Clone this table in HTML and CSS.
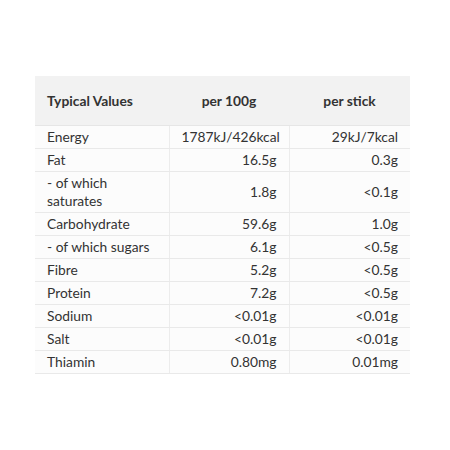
FILE: index.html
```html
<!DOCTYPE html>
<html>
<head>
<meta charset="utf-8">
<link rel="stylesheet" href="styles.css">
</head>
<body>
<div class="wrap">
<table class="nutri">
<colgroup><col class="c1"><col class="c2"><col class="c3"></colgroup>
<thead>
<tr><th class="lbl">Typical Values</th><th>per 100g</th><th>per stick</th></tr>
</thead>
<tbody>
<tr><td>Energy</td><td>1787kJ/426kcal</td><td>29kJ/7kcal</td></tr>
<tr><td>Fat</td><td>16.5g</td><td>0.3g</td></tr>
<tr><td>- of which<br>saturates</td><td>1.8g</td><td>&lt;0.1g</td></tr>
<tr><td>Carbohydrate</td><td>59.6g</td><td>1.0g</td></tr>
<tr><td>- of which sugars</td><td>6.1g</td><td>&lt;0.5g</td></tr>
<tr><td>Fibre</td><td>5.2g</td><td>&lt;0.5g</td></tr>
<tr><td>Protein</td><td>7.2g</td><td>&lt;0.5g</td></tr>
<tr><td>Sodium</td><td>&lt;0.01g</td><td>&lt;0.01g</td></tr>
<tr><td>Salt</td><td>&lt;0.01g</td><td>&lt;0.01g</td></tr>
<tr><td>Thiamin</td><td>0.80mg</td><td>0.01mg</td></tr>
</tbody>
</table>
</div>
</body>
</html>
```
FILE: styles.css
```css
html, body { margin: 0; padding: 0; background: #fff; }
body { font-family: Lato, "Noto Sans", sans-serif; color: #333; font-size: 13.8px; }
.wrap { padding: 76px 0 0 35px; }
.nutri { border-collapse: collapse; table-layout: fixed; width: 375px; }
.c1 { width: 134px; }
.c2 { width: 120px; }
.c3 { width: 121px; }
.nutri th {
  background: #f2f2f2;
  height: 49px;
  padding: 0 12px;
  font-weight: 700;
  text-align: center;
  border-bottom: 1px solid #e6e6e6;
}
.nutri th.lbl { text-align: left; }
.nutri td {
  background: #fcfcfc;
  padding: 2px 12px;
  height: 18px;
  line-height: 18px;
  text-align: right;
  border-bottom: 1px solid #e9e9e9;
  border-left: 1px solid #ececec;
}
.nutri td:first-child { text-align: left; border-left: none; }
```
